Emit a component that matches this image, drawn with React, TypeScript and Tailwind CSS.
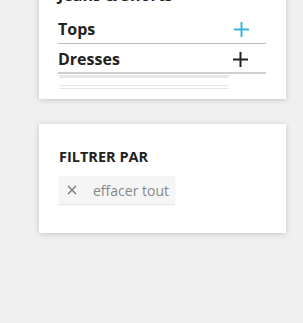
export default function App() {
  const font = { fontFamily: '"Open Sans", "Noto Sans", sans-serif' };
  return (
    <div className="w-[303px] h-[323px] bg-[#f0f0f0] overflow-hidden" style={font}>
      <div className="ml-[39px] w-[247px] bg-white shadow-[0_1px_6px_rgba(0,0,0,0.18)] mt-[-26px] px-[19px] pb-[10px]">
        <div className="pt-[10px] h-[32px] text-[16px] leading-[22px] font-bold text-[#222]">Jeans &amp; Shorts</div>
        <div className="pr-[1px]">
          <div className="flex items-center justify-between pt-[12px] pb-[3px] border-b border-[#bdbdbd]">
            <span className="text-[16px] leading-[22px] font-bold text-[#222]">Tops</span>
            <svg width="15" height="15" viewBox="0 0 15 15" className="mr-[17px]">
              <path d="M7.5 0V15M0 7.5H15" stroke="#3db8d3" strokeWidth="2" />
            </svg>
          </div>
          <div className="flex items-center justify-between pt-[4px] pb-[2px] border-b-2 border-[#cfcfcf]">
            <span className="text-[16px] leading-[22px] font-bold text-[#222]">Dresses</span>
            <svg width="15" height="15" viewBox="0 0 15 15" className="mr-[18px]">
              <path d="M7.5 0V15M0 7.5H15" stroke="#222" strokeWidth="2" />
            </svg>
          </div>
        </div>
        <div className="w-[170px] ml-[1px]">
          <div className="mt-[1px] h-[3px] bg-[#e8e8e8]"></div>
          <div className="mt-[7px] h-px bg-[#e6e6e6]"></div>
          <div className="mt-[2px] h-px bg-[#e6e6e6]"></div>
        </div>
      </div>
      <div className="ml-[39px] mt-[25px] w-[247px] bg-white shadow-[0_1px_6px_rgba(0,0,0,0.18)] px-[20px] pt-[23px] pb-[29px]">
        <div className="text-[14.5px] leading-[19px] font-bold text-[#222]">FILTRER PAR</div>
        <div className="mt-[10px] inline-flex items-center h-[28px] bg-[#f5f5f5] shadow-[0_1px_1px_rgba(0,0,0,0.1)] pl-[8px] pr-[6px]">
          <svg width="10" height="10" viewBox="0 0 10 10">
            <path d="M1 1L9 9M9 1L1 9" stroke="#777" strokeWidth="1.3" />
          </svg>
          <span className="ml-[16px] text-[14px] leading-[19px] text-[#888]">effacer tout</span>
        </div>
      </div>
    </div>
  );
}
